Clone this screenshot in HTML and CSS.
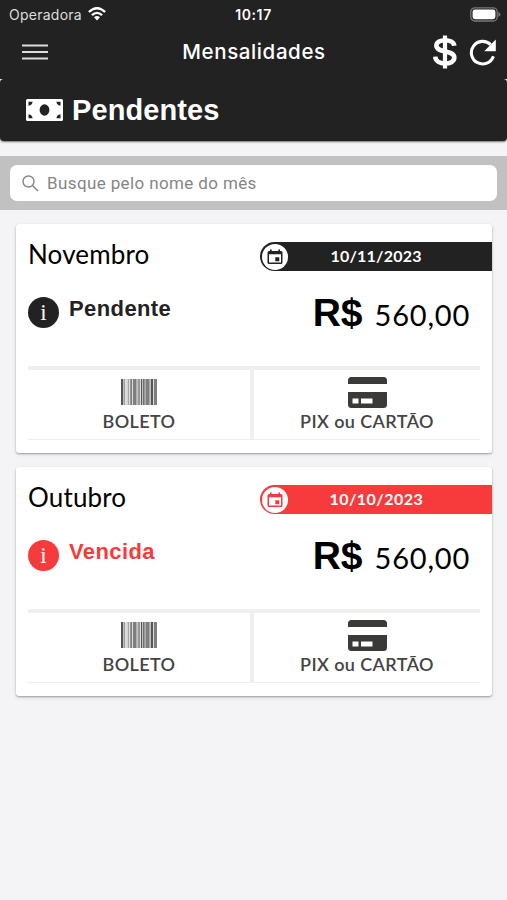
FILE: index.html
```html
<!DOCTYPE html>
<html lang="pt-BR">
<head>
<meta charset="utf-8">
<meta name="viewport" content="width=device-width, initial-scale=1">
<title>Mensalidades</title>
<link rel="stylesheet" href="styles.css">
</head>
<body>
<svg class="defs" width="0" height="0" aria-hidden="true">
  <symbol id="calendar" viewBox="0 0 16 16">
    <path fill="currentColor" d="M3 .5h1.700V2h6.600V.5H13V2h1q1.500 0 1.500 1.500v10Q15.500 15 14 15H2Q.5 15 .5 13.500v-10Q.5 2 2 2h1zM2 5.300v8.200h12V5.300zM8.300 8.200h4v4h-4z" fill-rule="evenodd"/>
  </symbol>
  <symbol id="barcode" viewBox="0 0 36 26">
    <rect width="36" height="26" fill="#ddd"/>
    <g fill="#555">
      <path d="M0 0h2v26H0zM9.500 0h1.200v26H9.500zM17.500 0h1v26h-1zM20 0h1.200v26H20zM22.200 0h1.300v26h-1.300zM30 0h2v26h-2z"/>
      <path opacity=".7" d="M2.700 0h1v26h-1zM12 0h3.200v26H12zM24.500 0h3.800v26h-3.800zM33 0h3v26h-3z"/>
      <path opacity=".4" d="M6.800 0H8v26H6.800zM15.500 0h1v26h-1zM28.500 0h1v26h-1z"/>
    </g>
  </symbol>
  <symbol id="card" viewBox="0 0 39 31">
    <path fill="#3b3a39" fill-rule="evenodd" d="M3.500 0h32Q39 0 39 3.500V7H0V3.500Q0 0 3.500 0zM0 15h39v12.500Q39 31 35.500 31h-32Q0 31 0 27.500zM4.500 21.500v5h6v-5zM13 21.500v5h11.500v-5z"/>
  </symbol>
</svg>

<header class="topbar">
  <div class="status">
    <div class="carrier"><span>Operadora</span>
      <svg width="18" height="14" viewBox="0 0 18 14" fill="none" stroke="#fff" stroke-width="2.300">
        <path d="M.9 5Q9-2.600 17.100 5M3.900 8.200Q9 3.600 14.100 8.200"/>
        <path d="M6 10.300Q9 7.800 12 10.300L9 13.400z" fill="#fff" stroke="none"/>
      </svg>
    </div>
    <div class="clock">10:17</div>
    <svg class="battery" width="31" height="15" viewBox="0 0 31 15">
      <rect x=".8" y=".8" width="26.400" height="13.200" rx="4" fill="none" stroke="#77787a" stroke-width="1.300"/>
      <rect x="2.600" y="2.600" width="22.800" height="9.600" rx="2.400" fill="#fff"/>
      <path d="M28.400 5q2 .8 2 2.400t-2 2.400z" fill="#77787a"/>
    </svg>
  </div>
  <div class="toolbar">
    <svg class="menu" width="26" height="16" viewBox="0 0 26 16"><path stroke="#ddd" stroke-width="2" d="M0 1.400h26M0 8h26M0 14.600h26"/></svg>
    <h1>Mensalidades</h1>
    <div class="actions">
      <svg width="24" height="34" viewBox="0 0 24 34" fill="none" stroke="#fff">
        <path stroke-width="4.600" d="M21.300 10.800C20.500 3.400 3.400 3.300 3.400 10.600C3.400 18.600 21.300 14.300 21.300 22.600C21.300 30.800 2.700 30.600 2.300 21.600"/>
        <path stroke-width="4.200" d="M12 .5v33"/>
      </svg>
      <svg width="27" height="27" viewBox="0 0 27 27">
        <path fill="none" stroke="#fff" stroke-width="3.100" d="M24.400 17.200A11.300 11.300 0 1 1 21.600 5.600"/>
        <path fill="#fff" d="M26.800.6v11.600H15.200z"/>
      </svg>
    </div>
  </div>
</header>

<section class="heading">
  <svg width="37" height="22" viewBox="0 0 37 22">
    <rect width="37" height="22" rx="1.500" fill="#fff"/>
    <g fill="#222"><ellipse cx="18.500" cy="11" rx="4.900" ry="5.800"/>
    <path d="M2.500 2.700h4.100q-.4 3.600-4.100 4zM34.500 2.700h-4.100q.4 3.600 4.100 4zM2.500 19.300h4.100q-.4-3.600-4.100-4zM34.500 19.300h-4.100q.4-3.600 4.100-4z"/></g>
  </svg>
  <h2>Pendentes</h2>
</section>

<div class="search">
  <div class="field">
    <svg width="17" height="17" viewBox="0 0 17 17" fill="none" stroke="#858585" stroke-width="1.400"><circle cx="6.500" cy="6.500" r="5.500"/><path d="M10.500 10.500L16 16"/></svg>
    <span>Busque pelo nome do mês</span>
  </div>
</div>

<main>
  <article class="bill">
    <div class="bill-top">
      <h3>Novembro</h3>
      <div class="due"><span class="badge"><svg width="16" height="16"><use href="#calendar"/></svg></span><time>10/11/2023</time></div>
    </div>
    <div class="bill-info">
      <span class="info">i</span><strong class="state">Pendente</strong>
      <div class="price"><b>R$</b><span>560,00</span></div>
    </div>
    <div class="pay">
      <div class="option"><svg width="36" height="26"><use href="#barcode"/></svg><span>BOLETO</span></div>
      <div class="option pix"><svg width="39" height="31"><use href="#card"/></svg><span>PIX ou CARTÃO</span></div>
    </div>
  </article>

  <article class="bill overdue">
    <div class="bill-top">
      <h3>Outubro</h3>
      <div class="due"><span class="badge"><svg width="16" height="16"><use href="#calendar"/></svg></span><time>10/10/2023</time></div>
    </div>
    <div class="bill-info">
      <span class="info">i</span><strong class="state">Vencida</strong>
      <div class="price"><b>R$</b><span>560,00</span></div>
    </div>
    <div class="pay">
      <div class="option"><svg width="36" height="26"><use href="#barcode"/></svg><span>BOLETO</span></div>
      <div class="option pix"><svg width="39" height="31"><use href="#card"/></svg><span>PIX ou CARTÃO</span></div>
    </div>
  </article>
</main>
</body>
</html>
```
FILE: styles.css
```css
* { box-sizing: border-box; }
body { margin: 0; height: 900px; overflow: hidden; background: #f4f4f7; color: #000; font-family: Lato, sans-serif; --tone: #222; }
h1, h2, h3 { margin: 0; }
svg { display: block; flex: none; }
.defs { position: absolute; }
.topbar { height: 79px; background: #222; color: #fff; }
.status { height: 28px; padding: 0 6px 0 9px; display: grid; grid-template-columns: 1fr auto 1fr; align-items: center; font-family: Inter, sans-serif; }
.carrier { display: flex; align-items: center; gap: 6px; font-size: 14px; color: #ddd; letter-spacing: .25px; }
.clock { margin-left: -3px; font-size: 14px; font-weight: 600; letter-spacing: .6px; }
.battery { justify-self: end; }
.toolbar { height: 51px; padding: 0 11px 3px 22px; display: grid; grid-template-columns: 1fr auto 1fr; align-items: center; }
.toolbar h1 { margin-right: 10px; font: 500 20.500px/24px Inter, sans-serif; letter-spacing: .6px; }
.actions { justify-self: end; display: flex; align-items: center; gap: 12px; }
.heading { height: 62px; padding: 0 26px; display: flex; align-items: center; gap: 9px; background: #222; color: #fff; border-radius: 4px; box-shadow: 0 1px 2px #0008; }
.heading h2 { font: bold 29px/34px "Liberation Sans", sans-serif; letter-spacing: .1px; }
.search { height: 54px; margin-top: 15px; padding: 9px 10px; background: #c1c1c2; }
.field { height: 36px; padding-left: 12px; display: flex; align-items: center; gap: 8px; border-radius: 7px; background: #fff; color: #858585; font: 17px/20px Roboto, sans-serif; letter-spacing: .38px; }
main { padding: 14px 15px 0 16px; display: grid; gap: 14px; }
.bill { height: 229px; background: #fff; border-radius: 3px; box-shadow: 0 1px 2px #0005, 0 2px 5px #0001; }
.overdue { --tone: #f73b3c; }
.bill-top { height: 65px; padding-left: 12px; display: flex; justify-content: space-between; align-items: center; }
.bill-top h3 { font-size: 26px; line-height: 32px; font-weight: 400; letter-spacing: .15px; margin-top: -6px; }
.due { width: 232px; height: 29px; display: flex; align-items: center; background: var(--tone); color: #fff; border-radius: 15px 0 0 15px; }
.badge { width: 26px; height: 26px; margin-left: 1.500px; border-radius: 50%; background: #fff; color: var(--tone); display: grid; place-items: center; }
.due time { margin: -2px 0 0 43px; font-size: 16px; line-height: 20px; font-weight: 700; letter-spacing: .2px; }
.overdue time { margin-left: 42px; letter-spacing: .45px; }
.bill-info { height: 77px; padding: 0 22px 0 12px; display: flex; align-items: flex-start; }
.info { width: 31px; height: 31px; margin-top: 8px; border-radius: 50%; background: var(--tone); color: #fff; text-align: center; font: 23px/31px "Liberation Serif", serif; }
.state { margin: 6px 0 0 10px; color: var(--tone); font: bold 22px/27px "Liberation Sans", sans-serif; letter-spacing: .4px; }
.price { margin: 1px 0 0 auto; display: flex; align-items: baseline; gap: 12px; }
.price b { font: bold 39px/46px "Liberation Sans", sans-serif; }
.price span { font-size: 29px; letter-spacing: .8px; }
.pay { height: 74px; margin: 0 12px; display: grid; grid-template-columns: 226px 226px; border-top: 4px solid #efefef; border-bottom: 1px solid #eee; }
.option { display: flex; flex-direction: column; align-items: center; justify-content: flex-end; gap: 5px; padding-bottom: 7px; color: #444; }
.option:first-child { border-right: 4px solid #efefef; }
.pix { gap: 2px; }
.option span { font-size: 18px; line-height: 22px; font-weight: 600; letter-spacing: .4px; }
```
